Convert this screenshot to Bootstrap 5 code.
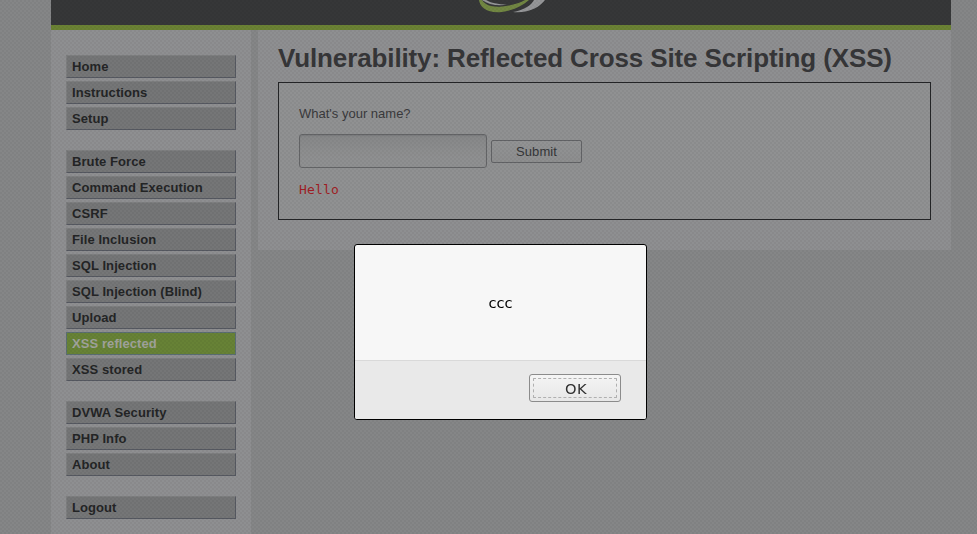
<!DOCTYPE html>
<html lang="en">
<head>
<meta charset="utf-8">
<meta name="viewport" content="width=device-width, initial-scale=1">
<title>Damn Vulnerable Web App</title>
<link href="https://cdn.jsdelivr.net/npm/bootstrap@5.3.0/dist/css/bootstrap.min.css" rel="stylesheet">
<style>
html, body { height: 100%; overflow: hidden; }
body { background: #858687; color: #3a3a3c; font-family: "Liberation Sans", Arial, sans-serif; font-size: 13px; line-height: 15px; }
.page { width: 900px; height: 534px; margin-left: 51px; }
.masthead { height: 30px; background: #363738; border-bottom: 5px solid #6b8234; }
.masthead svg { display: block; }
.side { width: 200px; padding: 25px 15px 0; background: #8e8f91; }
.side ul { margin-bottom: 20px; }
.menu-item { display: block; height: 23px; margin-bottom: 3px; padding: 3px 5px 0; border: 1px solid #7e7f80; border-right-color: #565961; border-bottom-color: #565961; background: #757677; color: #242526; font-weight: bold; letter-spacing: .08px; text-decoration: none; white-space: nowrap; }
.side ul li:last-child .menu-item { margin-bottom: 0; }
.menu-item.current { background: #678236; border-color: #5b6e72; color: #a0a29c; }
.main { width: 693px; height: 220px; margin-left: 7px; padding: 13px 20px 0; background: #8e8f91; }
.main h1 { font-size: 26px; line-height: 30px; margin: 0 0 9px; font-weight: bold; letter-spacing: -.125px; color: #363638; white-space: nowrap; }
.panel { height: 138px; border: 1px solid #242527; padding: 23px 20px 0; background: #909192; }
.panel form { margin-top: 13px; }
.name-field { width: 188px; height: 34px; border: 1px solid #646567; border-radius: 3px; background: linear-gradient(#868788, #8f9091 70%); box-shadow: inset 0 1px 1px #7c7d7f; padding: 4px; }
.send { width: 91px; height: 23px; padding: 1px 0 0; border: 1px solid #626366; border-radius: 2px; background: linear-gradient(#929394, #8d8e8f); color: #353638; font-size: 13px; line-height: 20px; letter-spacing: .1px; }
.greeting { font: 13px/15px "DejaVu Sans Mono", monospace; letter-spacing: .2px; color: #a01f25; margin-top: 14px; }
.shade { background-image: radial-gradient(circle at 1px 1px, rgba(0,0,0,.035) 0 1px, transparent 1.3px), radial-gradient(circle at 3px 3px, rgba(0,0,0,.035) 0 1px, transparent 1.3px); background-size: 4px 4px; pointer-events: none; }
.dialog-box { left: 354px; top: 244px; width: 293px; height: 176px; background: #f7f7f7; border: 1px solid #000; border-radius: 3px; overflow: hidden; font: 14.67px/18px "DejaVu Sans", sans-serif; color: #000; }
.dialog-foot { height: 59px; background: #e9e9e9; border-top: 1px solid #d9d9d9; padding: 13px 25px 0 0; }
.ok { width: 92px; height: 28px; padding: 3px; border: 1px solid #8b8b8b; border-radius: 3px; background: linear-gradient(#f4f4f4, #e7e7e7); color: #303030; }
.ok span { display: block; height: 20px; border: 1px dashed #b0b0b0; line-height: 20px; padding-left: 2px; border-radius: 1px; letter-spacing: .4px; }
</style>
</head>
<body>
<div class="page d-flex flex-column">
  <header class="masthead d-flex justify-content-center flex-shrink-0">
    <svg width="100" height="25" viewBox="451 0 100 25" aria-hidden="true">
      <path d="M479 0H482C485 5 492 7.500 502 6.500C512 5.500 520 3 525 0H529C522 6 513 10.500 502 12C488 13.500 480 8 479 0Z" fill="#728743"/>
      <path d="M482 0H486C491 3 498 4 507 4.800C497 6 488 4.500 482 0Z" fill="#959698"/>
      <path d="M534 0H545C540 7 529 13.300 513 12C524 10 531 5.500 534 0Z" fill="#959698"/>
    </svg>
  </header>
  <div class="d-flex flex-grow-1 align-items-start">
    <nav class="side align-self-stretch">
      <ul class="list-unstyled">
        <li><a class="menu-item" href="#">Home</a></li>
        <li><a class="menu-item" href="#">Instructions</a></li>
        <li><a class="menu-item" href="#">Setup</a></li>
      </ul>
      <ul class="list-unstyled">
        <li><a class="menu-item" href="#">Brute Force</a></li>
        <li><a class="menu-item" href="#">Command Execution</a></li>
        <li><a class="menu-item" href="#">CSRF</a></li>
        <li><a class="menu-item" href="#">File Inclusion</a></li>
        <li><a class="menu-item" href="#">SQL Injection</a></li>
        <li><a class="menu-item" href="#">SQL Injection (Blind)</a></li>
        <li><a class="menu-item" href="#">Upload</a></li>
        <li><a class="menu-item current" href="#">XSS reflected</a></li>
        <li><a class="menu-item" href="#">XSS stored</a></li>
      </ul>
      <ul class="list-unstyled">
        <li><a class="menu-item" href="#">DVWA Security</a></li>
        <li><a class="menu-item" href="#">PHP Info</a></li>
        <li><a class="menu-item" href="#">About</a></li>
      </ul>
      <ul class="list-unstyled mb-0">
        <li><a class="menu-item" href="#">Logout</a></li>
      </ul>
    </nav>
    <main class="main">
      <h1>Vulnerability: Reflected Cross Site Scripting (XSS)</h1>
      <section class="panel">
        <label for="who" class="d-block">What's your name?</label>
        <form class="d-flex align-items-center gap-1">
          <input id="who" class="name-field" type="text">
          <button class="send" type="button">Submit</button>
        </form>
        <div class="greeting">Hello</div>
      </section>
    </main>
  </div>
</div>
<div class="shade position-fixed top-0 start-0 w-100 h-100"></div>
<div class="dialog-box position-fixed d-flex flex-column" role="alertdialog">
  <div class="flex-grow-1 d-flex align-items-center justify-content-center">ccc</div>
  <div class="dialog-foot d-flex justify-content-end align-items-start">
    <button class="ok" type="button"><span>OK</span></button>
  </div>
</div>
<script src="https://cdn.jsdelivr.net/npm/bootstrap@5.3.0/dist/js/bootstrap.bundle.min.js"></script>
</body>
</html>
